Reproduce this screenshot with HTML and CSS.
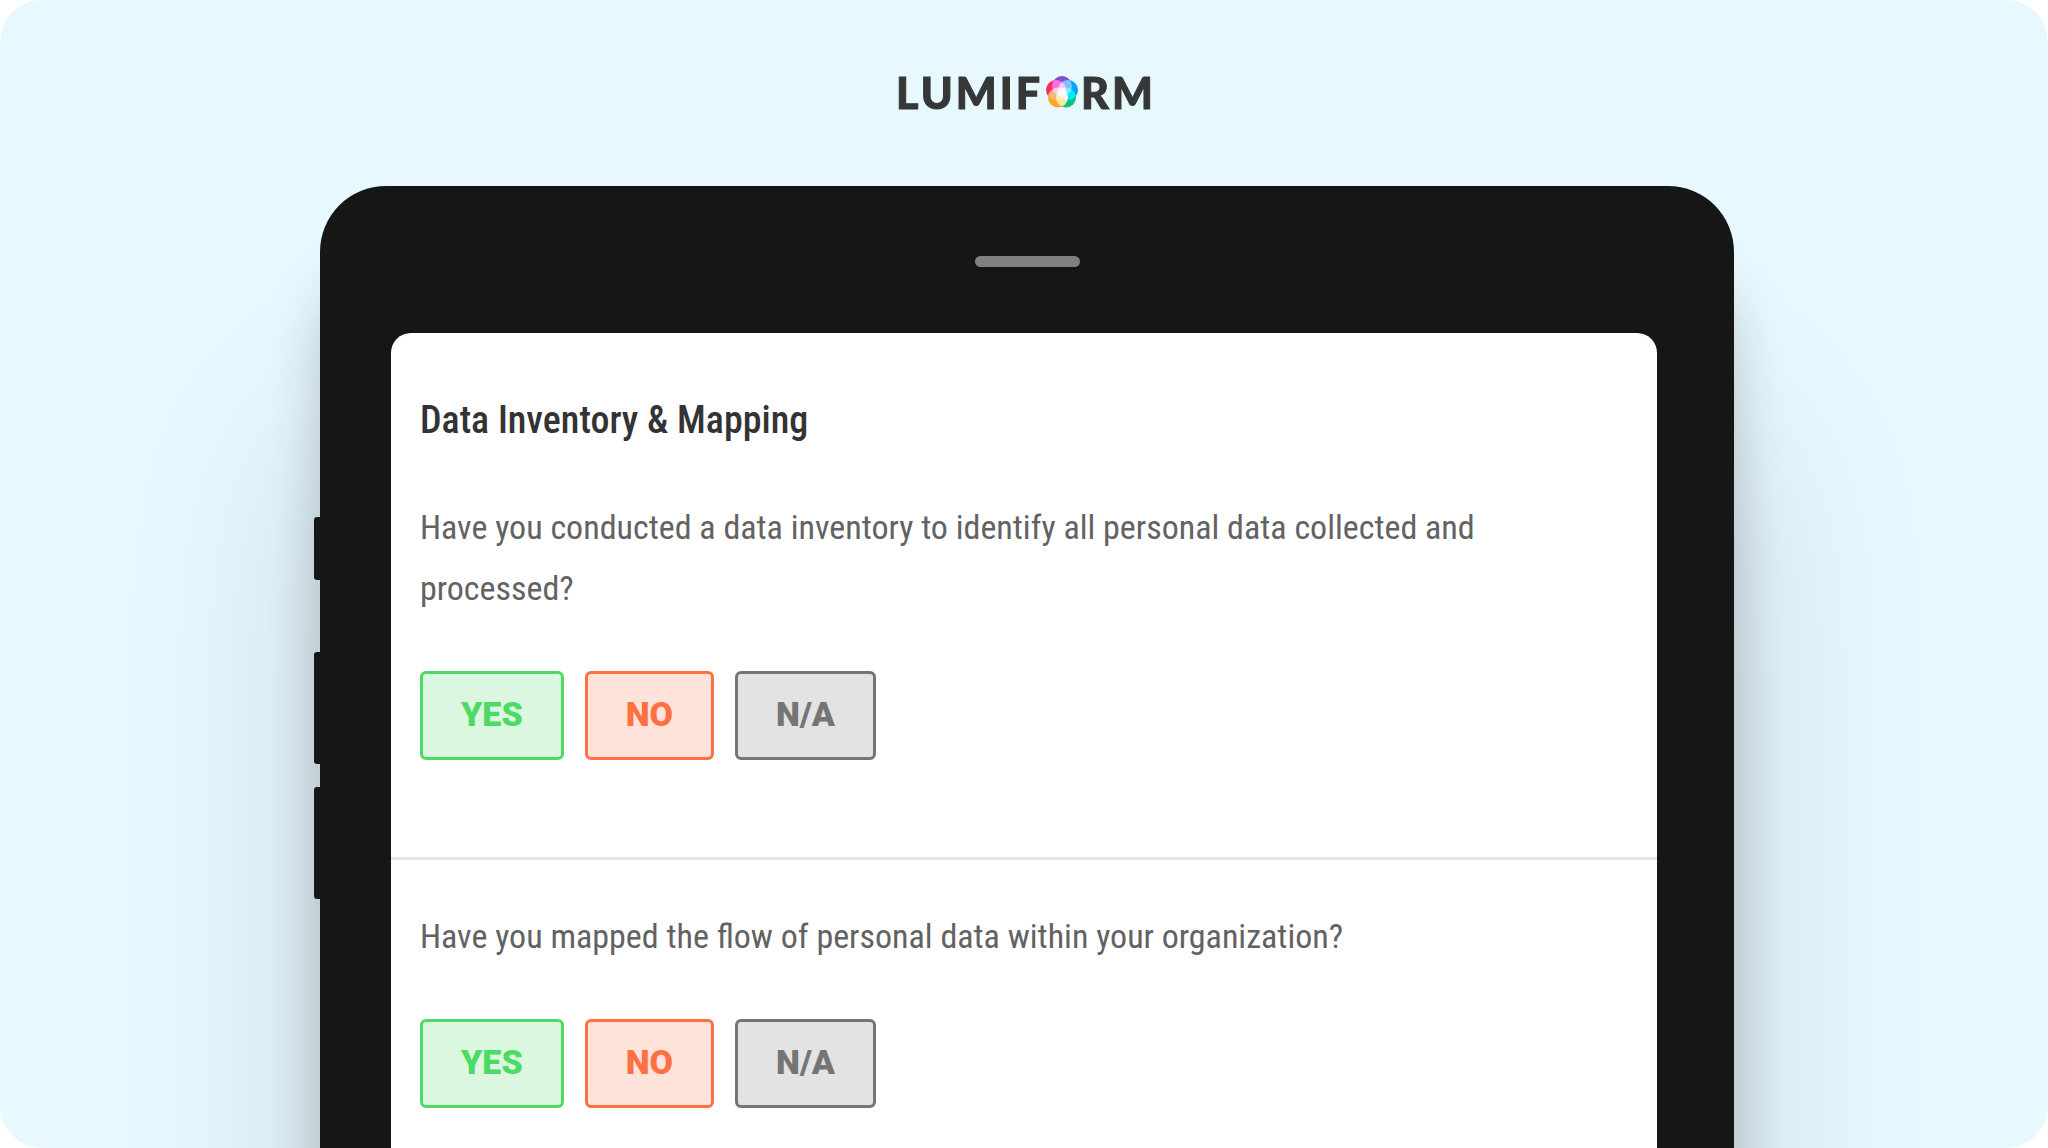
FILE: index.html
```html
<!DOCTYPE html>
<html lang="en">
<head>
<meta charset="utf-8">
<meta name="viewport" content="width=device-width, initial-scale=1">
<title>Lumiform</title>
<link rel="stylesheet" href="styles.css">
</head>
<body>
<div class="stage">
	<header class="logo">
		<span>LUMIF</span>
		<svg class="flower" viewBox="0 0 32 34" aria-hidden="true">
			<g class="petals">
				<circle cx="16" cy="11" r="10" fill="#7f52c9"/>
				<circle cx="22" cy="15" r="10" fill="#00a2ff"/>
				<circle cx="20" cy="22.500" r="10" fill="#00c486"/>
				<circle cx="12" cy="22.500" r="10" fill="#ffa62b"/>
				<circle cx="10" cy="15" r="10" fill="#fa2a5f"/>
			</g>
		</svg>
		<span>RM</span>
	</header>
	<div class="tablet">
		<i class="key key-power"></i>
		<i class="key key-up"></i>
		<i class="key key-down"></i>
		<div class="speaker"></div>
		<main class="screen">
			<h1>Data Inventory &amp; Mapping</h1>
			<section class="question">
				<p>Have you conducted a data inventory to identify all personal data collected and processed?</p>
				<div class="answers">
					<button type="button" class="yes">YES</button>
					<button type="button" class="no">NO</button>
					<button type="button" class="na">N/A</button>
				</div>
			</section>
			<section class="question">
				<p>Have you mapped the flow of personal data within your organization?</p>
				<div class="answers">
					<button type="button" class="yes">YES</button>
					<button type="button" class="no">NO</button>
					<button type="button" class="na">N/A</button>
				</div>
			</section>
		</main>
	</div>
</div>
</body>
</html>
```
FILE: styles.css
```css
html, body { margin: 0; padding: 0; background: #FFF; }
body { font: normal 34px/61px 'Roboto Condensed', Roboto, sans-serif; color: #626262; }
h1, p { margin: 0; }

.stage { box-sizing: border-box; height: 100vh; overflow: hidden; border-radius: 42px; background: #E7F9FF; display: flex; flex-direction: column; }

.logo { height: 184px; padding: 0 0 2px 4px; flex: none; display: flex; align-items: center; justify-content: center; gap: 3px; font: 900 43px/1 Lato, sans-serif; letter-spacing: 3px; color: #363838; -webkit-text-stroke: 1px #363838; }
.flower { width: 32px; height: 34px; }
.petals { isolation: isolate; }
.petals circle { mix-blend-mode: screen; stroke: none; }

.tablet { position: relative; flex: 1 0 auto; display: flex; flex-direction: column; margin: 0 314px 0 320px; padding-top: 70px; border-radius: 66px 66px 0 0; background: #161616; box-shadow: 0 250px 200px rgba(0, 0, 0, 0.16), 0 90px 60px rgba(0, 0, 0, 0.2); }
.key { position: absolute; left: -6px; width: 12px; height: 112px; border-radius: 3px; background: #161616; }
.key-power { top: 331px; height: 63px; }
.key-up { top: 466px; }
.key-down { top: 601px; }
.speaker { width: 105px; height: 11px; margin: 0 auto 66px; border-radius: 6px; background: #808080; }

.screen { flex: 1; margin: 0 77px 0 71px; padding-top: 56px; border-radius: 20px 20px 0 0; background: #FFF; }
h1 { padding: 0 29px; font-size: 38px; font-weight: 500; line-height: 62px; color: #333; }
.question { padding: 46px 29px 97px; border-bottom: 3px solid #E5E5E5; }
.answers { display: flex; gap: 21px; margin-top: 52px; }
button { height: 89px; padding: 0 38px 3px; border: 3px solid; border-radius: 6px; font: 900 34px/1 Roboto, sans-serif; cursor: pointer; }
.yes { color: #4CD964; background: #DBF7E0; }
.no { color: #FF7043; background: #FFE2DA; }
.na { color: #757575; background: #E3E3E3; }
```
